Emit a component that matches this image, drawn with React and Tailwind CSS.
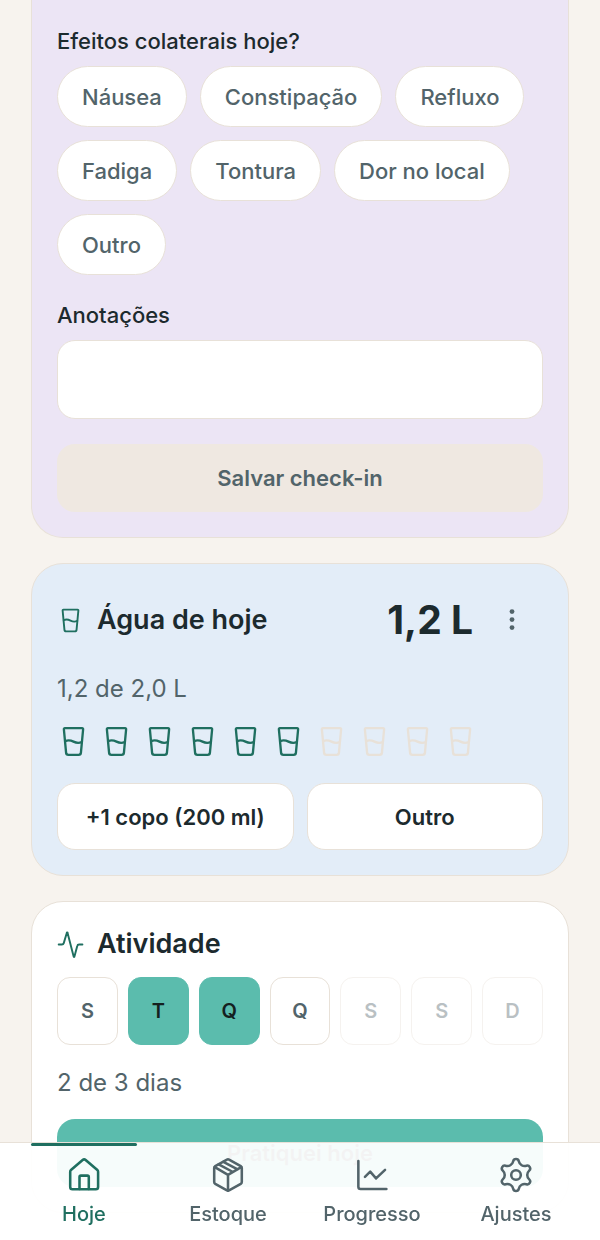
import { useState } from "react";

const sideEffects = ["Náusea", "Constipação", "Refluxo", "Fadiga", "Tontura", "Dor no local", "Outro"];

const weekDays = [
  { id: "seg", label: "S", status: "open" },
  { id: "ter", label: "T", status: "done" },
  { id: "qua", label: "Q", status: "done" },
  { id: "qui", label: "Q", status: "open" },
  { id: "sex", label: "S", status: "future" },
  { id: "sab", label: "S", status: "future" },
  { id: "dom", label: "D", status: "future" }
];

const dayStyles = {
  open: "border-[#e8e1d8] bg-white text-[#52646a]",
  done: "border-[#5bbcad] bg-[#5bbcad] text-[#14211f]",
  future: "border-[#e8e1d8] bg-white text-[#52646a] opacity-40"
};

function Icon({ className, strokeWidth = 1.7, children }) {
  return (
    <svg
      viewBox="0 0 24 24"
      fill="none"
      stroke="currentColor"
      strokeWidth={strokeWidth}
      strokeLinecap="round"
      strokeLinejoin="round"
      className={className}
      aria-hidden="true"
    >
      {children}
    </svg>
  );
}

function GlassIcon({ className }) {
  return (
    <Icon className={className}>
      <path d="M5.7 2.3h12.6a.7.7 0 0 1 .7.8l-1.6 17a1.7 1.7 0 0 1-1.7 1.6H8.3a1.7 1.7 0 0 1-1.7-1.6L5 3.1a.7.7 0 0 1 .7-.8z" />
      <path d="M6 11.7c2-.9 4-.6 6 .4s4 1.2 6 .3" />
    </Icon>
  );
}

function HomeIcon() {
  return (
    <Icon className="size-9">
      <path d="M2.8 9.8a1.5 1.5 0 0 1 .5-1.1L11.100 2a1.5 1.5 0 0 1 2 0l7.800 6.700a1.5 1.5 0 0 1 .5 1.100V20a1.5 1.5 0 0 1-1.5 1.500H4.300A1.5 1.5 0 0 1 2.800 20z" />
      <path d="M9 21.300v-8a.9.9 0 0 1 .9-.9h4.400a.9.9 0 0 1 .9.9v8" />
    </Icon>
  );
}

function BoxIcon() {
  return (
    <Icon className="size-9">
      <path d="M11.300 1.700a1.5 1.5 0 0 1 1.400 0l7.800 4.400a1.400 1.400 0 0 1 .7 1.200v9.400a1.400 1.400 0 0 1-.7 1.200l-7.800 4.400a1.5 1.5 0 0 1-1.400 0l-7.800-4.400a1.400 1.400 0 0 1-.7-1.200V7.300a1.400 1.400 0 0 1 .7-1.200z" />
      <path d="M3.200 6.800 12 11.900l8.800-5.100M12 11.900v10.500M5.800 4.900l9.500 5.100M8.900 3.200l9.500 5.100" />
    </Icon>
  );
}

function ChartIcon() {
  return (
    <Icon className="size-9">
      <path d="M2.900 2.600v17.200a1.5 1.5 0 0 0 1.5 1.500h17.200" />
      <path d="m7.300 13.200 3.500-3.400 3.900 4.500 6-5.700" />
    </Icon>
  );
}

function GearIcon() {
  return (
    <Icon className="size-9">
      <circle cx="12" cy="12" r="3.2" />
      <path d="M10.14 2.9A1.9 1.9 0 0 1 13.86 2.9A3.96 3.96 0 0 0 18.95 5.84A1.9 1.9 0 0 1 20.81 9.06A3.96 3.96 0 0 0 20.81 14.94A1.9 1.9 0 0 1 18.95 18.16A3.96 3.96 0 0 0 13.86 21.1A1.9 1.9 0 0 1 10.14 21.1A3.96 3.96 0 0 0 5.05 18.16A1.9 1.9 0 0 1 3.19 14.94A3.96 3.96 0 0 0 3.19 9.06A1.9 1.9 0 0 1 5.05 5.84A3.96 3.96 0 0 0 10.14 2.9z" />
    </Icon>
  );
}

function CheckinCard() {
  const [selected, setSelected] = useState([]);
  const [notes, setNotes] = useState("");

  const toggleEffect = (name) => {
    setSelected(selected.includes(name) ? selected.filter((s) => s !== name) : [...selected, name]);
  };

  return (
    <section className="rounded-b-[32px] border border-t-0 border-[#e8e1d8] bg-[#ece5f5] px-[25px] pt-[26px] pb-[25px]">
      <h3 className="text-[22px] leading-[30px] font-medium">Efeitos colaterais hoje?</h3>
      <div className="mt-[10px] flex flex-wrap gap-[13px]">
        {sideEffects.map((name) => (
          <button
            key={name}
            type="button"
            aria-pressed={selected.includes(name)}
            onClick={() => toggleEffect(name)}
            className="h-[61px] rounded-full border border-[#e8e1d8] bg-white px-6 text-[22px] leading-[30px] font-medium text-[#52646a] aria-pressed:bg-[#5bbcad]"
          >
            {name}
          </button>
        ))}
      </div>

      <label htmlFor="notes" className="mt-[25px] block text-[22px] leading-[30px] font-medium">
        Anotações
      </label>
      <textarea
        id="notes"
        value={notes}
        onChange={(e) => setNotes(e.target.value)}
        className="mt-[10px] block h-[79px] w-full resize-none rounded-[18px] border border-[#e8e1d8] bg-white px-4 py-3 text-[22px] leading-[30px]"
      />

      <button
        type="button"
        disabled
        className="mt-[25px] h-[68px] w-full rounded-[18px] bg-[#efe8e1] text-[22px] leading-[30px] font-semibold text-[#52646a]"
      >
        Salvar check-in
      </button>
    </section>
  );
}

function WaterCard() {
  const [cups, setCups] = useState(6);
  const liters = (cups * 0.2).toFixed(1).replace(".", ",");

  return (
    <section className="rounded-[32px] border border-[#e8e1d8] bg-[#e3edf8] p-[25px]">
      <div className="flex h-[62px] items-center">
        <GlassIcon className="size-[27px] text-[#1f6f60]" />
        <h2 className="ml-[13px] text-[27px] leading-9 font-semibold">Água de hoje</h2>
        <span className="ml-auto text-[39px] leading-[48px] font-bold">{liters} L</span>
        <button type="button" aria-label="Mais opções" className="ml-2 flex size-[62px] items-center justify-center text-[#52646a]">
          <svg viewBox="0 0 24 24" fill="currentColor" className="size-8" aria-hidden="true">
            <circle cx="12" cy="5.7" r="1.8" />
            <circle cx="12" cy="11.7" r="1.8" />
            <circle cx="12" cy="17.7" r="1.8" />
          </svg>
        </button>
      </div>

      <p className="mt-5 text-2xl leading-9 text-[#52646a]">{liters} de 2,0 L</p>

      <div className="mt-[18px] flex gap-[10px]">
        {[...Array(10)].map((_, i) => (
          <GlassIcon
            key={i}
            className={`size-[33px] ${i < cups ? "text-[#1f6f60]" : "text-[#e8e1d8]"}`}
          />
        ))}
      </div>

      <div className="mt-[25px] grid grid-cols-2 gap-[13px] text-[22px] leading-[30px] font-semibold">
        <button
          type="button"
          onClick={() => setCups(Math.min(cups + 1, 10))}
          className="h-[67px] rounded-[18px] border border-[#e8e1d8] bg-white"
        >
          +1 copo (200 ml)
        </button>
        <button type="button" className="h-[67px] rounded-[18px] border border-[#e8e1d8] bg-white">
          Outro
        </button>
      </div>
    </section>
  );
}

function ActivityCard() {
  return (
    <section className="rounded-[32px] border border-[#e8e1d8] bg-white px-[25px] pt-6 pb-[25px]">
      <div className="flex items-center">
        <Icon className="size-[27px] text-[#1f6f60]">
          <path d="M1.5 12h2.9a1.7 1.7 0 0 0 1.6-1.2L8.7 1.7a.35.35 0 0 1 .7 0l5.400 21a.35.35 0 0 0 .7 0l2.500-9.400a1.7 1.7 0 0 1 1.600-1.300h3" />
        </Icon>
        <h2 className="ml-[13px] text-[27px] leading-9 font-semibold">Atividade</h2>
      </div>

      <div className="mt-[15px] grid grid-cols-7 gap-[10px]">
        {weekDays.map((day) => (
          <button
            key={day.id}
            type="button"
            disabled={day.status === "future"}
            className={`h-[68px] rounded-[13px] border text-[20px] leading-7 font-semibold ${dayStyles[day.status]}`}
          >
            {day.label}
          </button>
        ))}
      </div>

      <p className="mt-5 text-2xl leading-9 text-[#52646a]">2 de 3 dias</p>

      <button
        type="button"
        className="mt-[18px] h-[68px] w-full rounded-[18px] bg-[#5bbcad] text-[22px] leading-[30px] font-semibold text-[#14211f]"
      >
        Pratiquei hoje
      </button>
    </section>
  );
}

function BottomNav() {
  const items = [
    { label: "Hoje", icon: <HomeIcon />, active: true },
    { label: "Estoque", icon: <BoxIcon /> },
    { label: "Progresso", icon: <ChartIcon /> },
    { label: "Ajustes", icon: <GearIcon /> }
  ];

  return (
    <nav className="fixed inset-x-0 bottom-0 border-t border-[#e8e1d8] bg-white/95 px-3">
      <div className="grid grid-cols-4">
        {items.map((item) => (
          <a
            key={item.label}
            href="#"
            aria-current={item.active ? "page" : undefined}
            className={`relative flex h-[97px] flex-col items-center pt-[14px] text-[20px] leading-7 font-medium ${
              item.active ? "text-[#1f6f60]" : "text-[#52646a]"
            }`}
          >
            {item.active && <span className="absolute inset-x-[19px] top-0 h-[3px] rounded-full bg-[#1f6f60]" />}
            {item.icon}
            <span className="mt-[7px]">{item.label}</span>
          </a>
        ))}
      </div>
    </nav>
  );
}

function App() {
  return (
    <div className="min-h-screen bg-[#f7f3ee] font-['Inter',sans-serif] text-[#1c2a2e]">
      <main className="flex flex-col gap-[25px] px-[31px] pb-6">
        <CheckinCard />
        <WaterCard />
        <ActivityCard />
      </main>
      <BottomNav />
    </div>
  );
}

export default App;
